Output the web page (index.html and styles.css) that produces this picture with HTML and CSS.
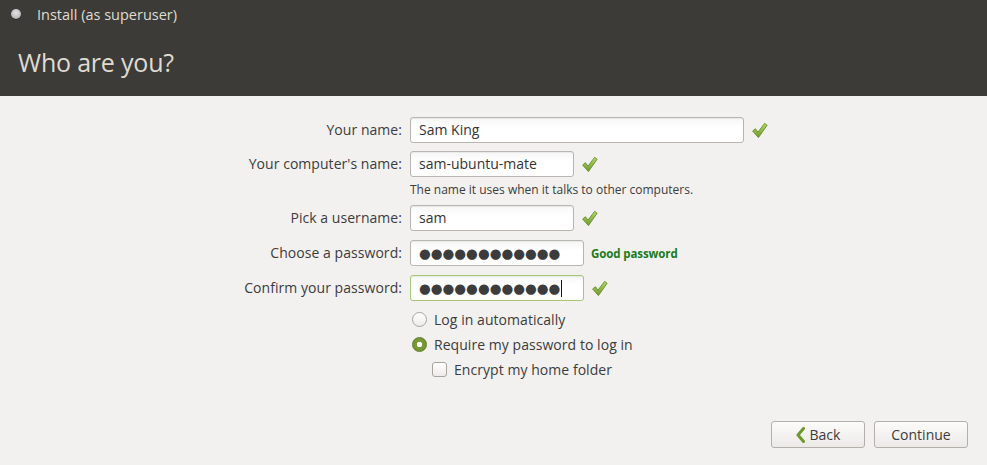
FILE: index.html
```html
<!DOCTYPE html>
<html>
<head>
<meta charset="utf-8">
<link rel="stylesheet" href="styles.css">
</head>
<body>
<div class="window">
  <header class="header">
    <div class="titlebar">
      <span class="win-btn"></span>
      <span class="win-title">Install (as superuser)</span>
    </div>
    <h1 class="page-title">Who are you?</h1>
  </header>
  <main class="content">
    <div class="form">
      <label class="lbl">Your name:</label>
      <div class="field-row">
        <div class="entry entry-wide">Sam King</div>
        <svg class="check" viewBox="0 0 16 16" width="17" height="17"><defs><linearGradient id="g1" x1="0" y1="0" x2="0" y2="1"><stop offset="0" stop-color="#b7d66a"/><stop offset="1" stop-color="#6f9a2a"/></linearGradient></defs><path d="M1.5 8.5 L4.2 6.3 L6.5 9.6 L12.8 1.3 L15.2 3 L7 14.7 Z" fill="url(#g1)" stroke="#5f8a22" stroke-width="0.8" stroke-linejoin="round"/></svg>
      </div>

      <label class="lbl">Your computer's name:</label>
      <div class="field-row">
        <div class="entry entry-mid">sam-ubuntu-mate</div>
        <svg class="check" viewBox="0 0 16 16" width="17" height="17"><defs><linearGradient id="g2" x1="0" y1="0" x2="0" y2="1"><stop offset="0" stop-color="#b7d66a"/><stop offset="1" stop-color="#6f9a2a"/></linearGradient></defs><path d="M1.5 8.5 L4.2 6.3 L6.5 9.6 L12.8 1.3 L15.2 3 L7 14.7 Z" fill="url(#g2)" stroke="#5f8a22" stroke-width="0.8" stroke-linejoin="round"/></svg>
      </div>
      <span></span>
      <div class="hint">The name it uses when it talks to other computers.</div>

      <label class="lbl">Pick a username:</label>
      <div class="field-row">
        <div class="entry entry-mid">sam</div>
        <svg class="check" viewBox="0 0 16 16" width="17" height="17"><defs><linearGradient id="g3" x1="0" y1="0" x2="0" y2="1"><stop offset="0" stop-color="#b7d66a"/><stop offset="1" stop-color="#6f9a2a"/></linearGradient></defs><path d="M1.5 8.5 L4.2 6.3 L6.5 9.6 L12.8 1.3 L15.2 3 L7 14.7 Z" fill="url(#g3)" stroke="#5f8a22" stroke-width="0.8" stroke-linejoin="round"/></svg>
      </div>

      <label class="lbl lbl-pw">Choose a password:</label>
      <div class="field-row row-pw">
        <div class="entry entry-pw"><span class="dots">●●●●●●●●●●●●</span></div>
        <span class="good">Good password</span>
      </div>

      <label class="lbl lbl-pw">Confirm your password:</label>
      <div class="field-row row-pw">
        <div class="entry entry-pw entry-focus"><span class="dots">●●●●●●●●●●●●</span><span class="caret"></span></div>
        <svg class="check" viewBox="0 0 16 16" width="17" height="17"><defs><linearGradient id="g4" x1="0" y1="0" x2="0" y2="1"><stop offset="0" stop-color="#b7d66a"/><stop offset="1" stop-color="#6f9a2a"/></linearGradient></defs><path d="M1.5 8.5 L4.2 6.3 L6.5 9.6 L12.8 1.3 L15.2 3 L7 14.7 Z" fill="url(#g4)" stroke="#5f8a22" stroke-width="0.8" stroke-linejoin="round"/></svg>
      </div>

      <span></span>
      <div class="options">
        <div class="opt"><span class="radio"></span><span>Log in automatically</span></div>
        <div class="opt"><span class="radio radio-on"></span><span>Require my password to log in</span></div>
        <div class="opt opt-sub"><span class="checkbox"></span><span>Encrypt my home folder</span></div>
      </div>
    </div>
  </main>
  <footer class="buttons">
    <button class="btn btn-back"><svg class="chev" viewBox="0 0 10 16" width="10" height="16"><path d="M7.5 1.5 L2 8 L7.5 14.5" fill="none" stroke="#6f9a2a" stroke-width="3" stroke-linejoin="round" stroke-linecap="round"/></svg>Back</button>
    <button class="btn">Continue</button>
  </footer>
</div>
</body>
</html>
```

FILE: styles.css
```css
html, body {
  margin: 0;
  padding: 0;
}
body {
  width: 987px;
  height: 465px;
  overflow: hidden;
  background: #f2f1f0;
  font-family: "Open Sans", "DejaVu Sans", sans-serif;
  color: #3c3c3c;
}
.window {
  display: flex;
  flex-direction: column;
  height: 465px;
}
.header {
  background: #3c3b37;
  height: 96px;
  box-sizing: border-box;
}
.titlebar {
  height: 28px;
  display: flex;
  align-items: center;
  padding-left: 11px;
}
.win-btn {
  width: 10px;
  height: 10px;
  border-radius: 50%;
  background: radial-gradient(circle at 50% 40%, #e6e6e6 0, #bdbdbd 60%, #8a8a8a 100%);
  box-shadow: 0 1px 0 #2a2a27;
  margin-right: 16px;
}
.win-title {
  color: #dfdbd2;
  font-size: 14.5px;
  font-weight: 500;
  letter-spacing: 0;
}
.page-title {
  margin: 0;
  padding: 17px 0 0 18px;
  color: #dfdbd2;
  font-size: 25px;
  font-weight: 400;
  letter-spacing: -0.2px;
}
.content {
  flex: 1;
  padding-top: 21px;
}
.form {
  display: grid;
  grid-template-columns: 402px auto;
  column-gap: 8px;
  row-gap: 8px;
  align-items: center;
  font-size: 14px;
}
.lbl {
  text-align: right;
  height: 26px;
  line-height: 26px;
  color: #3c3c3c;
  letter-spacing: 0.05px;
}
.field-row {
  display: flex;
  align-items: center;
  height: 26px;
}
.lbl-pw, .row-pw {
  margin-top: 1px;
}
.entry {
  box-sizing: border-box;
  height: 26px;
  border: 1px solid #b9b6b1;
  border-radius: 3px;
  background: linear-gradient(#f6f6f6, #ffffff 40%);
  padding: 0 8px;
  line-height: 24px;
  font-size: 14px;
  color: #333333;
  display: flex;
  align-items: center;
  box-shadow: inset 0 1px 1px rgba(0,0,0,0.06);
}
.entry-wide { width: 334px; }
.entry-mid { width: 164px; }
.entry-pw { width: 174px; }
.entry-focus { border-color: #a6c774; }
.dots {
  font-family: "DejaVu Sans", sans-serif;
  font-size: 13.5px;
  letter-spacing: 0;
  color: #3c3c3c;
}
.caret {
  display: inline-block;
  width: 1px;
  height: 17px;
  background: #111;
  margin-left: 1px;
}
.check {
  margin-left: 7px;
  flex: none;
}
.good {
  margin-left: 7px;
  color: #1c7a1c;
  font-size: 11.5px;
  font-weight: 700;
  letter-spacing: -0.1px;
}
.hint {
  font-size: 12px;
  color: #3c3c3c;
  margin-top: -2px;
  height: 14px;
  line-height: 14px;
}
.options {
  display: flex;
  flex-direction: column;
  gap: 7px;
  padding-top: 1px;
  padding-left: 2px;
}
.opt {
  display: flex;
  align-items: center;
  height: 18px;
  gap: 7px;
  font-size: 14px;
  letter-spacing: 0.05px;
}
.opt-sub {
  padding-left: 20px;
}
.radio {
  box-sizing: border-box;
  width: 15px;
  height: 15px;
  border-radius: 50%;
  border: 1px solid #a8a59f;
  background: linear-gradient(#ffffff, #ecebe9);
}
.radio-on {
  border-color: #5e7d28;
  background: radial-gradient(circle, #ffffff 0, #ffffff 2.5px, #7c9e38 3px, #6c8c2d 100%);
}
.checkbox {
  box-sizing: border-box;
  width: 15px;
  height: 15px;
  border-radius: 3px;
  border: 1px solid #a8a59f;
  background: linear-gradient(#ffffff, #ecebe9);
}
.buttons {
  display: flex;
  justify-content: flex-end;
  gap: 9px;
  padding: 0 19px 17px 0;
}
.btn {
  box-sizing: border-box;
  width: 94px;
  height: 27px;
  border: 1px solid #b3b0aa;
  border-radius: 3px;
  background: linear-gradient(#fbfbfa, #eceae8);
  font-family: "Open Sans", "DejaVu Sans", sans-serif;
  font-size: 14px;
  color: #3c3c3c;
  display: flex;
  align-items: center;
  justify-content: center;
  gap: 4px;
  padding: 0;
}
.btn-back {
  padding-right: 0;
}
.chev {
  flex: none;
}
```
